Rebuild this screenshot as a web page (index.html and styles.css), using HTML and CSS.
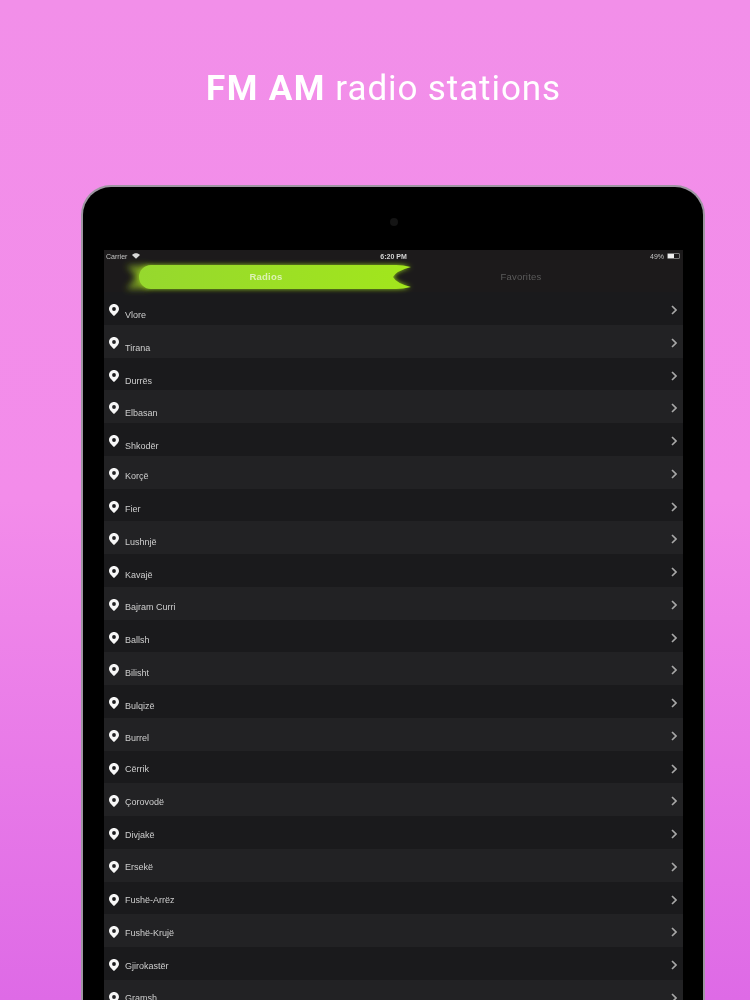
FILE: index.html
```html
<!DOCTYPE html>
<html lang="en">
<head>
    <meta charset="UTF-8">
    <meta name="viewport" content="width=device-width, initial-scale=1.0">
    <title>FM AM radio stations</title>
    <link rel="stylesheet" href="styles.css">
</head>
<body>
    <h1 class="headline"><b>FM AM</b> radio stations</h1>

    <div class="device">
        <div class="bezel-top"><span class="camera"></span></div>
        <div class="screen">
            <div class="status-bar">
                <div class="status-left">
                    <span>Carrier</span>
                    <svg class="wifi" viewBox="0 0 10 7"><path d="M5 7 0 2.2C2.8-.7 7.2-.7 10 2.2Z" fill="#d8d8d8"/></svg>
                </div>
                <div class="status-time">6:20 PM</div>
                <div class="status-right">
                    <span>49%</span>
                    <span class="battery"><span class="battery-level"></span></span>
                </div>
            </div>

            <div class="tabs">
                <div class="tab tab-active">
                    <svg class="tab-shape" viewBox="0 0 300 40">
                        <defs>
                            <filter id="glow" x="-10%" y="-40%" width="120%" height="180%"><feGaussianBlur stdDeviation="2.8"/></filter>
                            <filter id="tailGlow" x="-50%" y="-50%" width="200%" height="200%"><feGaussianBlur stdDeviation="3.4"/></filter>
                            <linearGradient id="pill" x1="0" x2="1" y1="0" y2="0">
                                <stop offset="0" stop-color="#96d82e"/>
                                <stop offset="1" stop-color="#a2e61c"/>
                            </linearGradient>
                        </defs>
                        <path d="M8 9 30 8V32L8 32Q15 26 17 20 15 14 8 9Z" fill="#6f8f20" filter="url(#tailGlow)"/>
                        <path d="M33 8H278Q285 8 293 10 278 14 275 20 278 26 293 30 285 32 278 32H33A12 12 0 0 1 33 8Z" fill="#94cf1e" filter="url(#glow)"/>
                        <path d="M33 8H278Q285 8 293 10 278 14 275 20 278 26 293 30 285 32 278 32H33A12 12 0 0 1 33 8Z" fill="url(#pill)"/>
                    </svg>
                    <span class="tab-label">Radios</span>
                </div>
                <div class="tab">
                    <span class="tab-label">Favorites</span>
                </div>
            </div>

            <ul class="city-list" id="cityList"></ul>
        </div>
    </div>

    <script>
        var cities = ['Vlore', 'Tirana', 'Durrës', 'Elbasan', 'Shkodër', 'Korçë', 'Fier', 'Lushnjë', 'Kavajë', 'Bajram Curri', 'Ballsh', 'Bilisht', 'Bulqizë', 'Burrel', 'Cërrik', 'Çorovodë', 'Divjakë', 'Ersekë', 'Fushë-Arrëz', 'Fushë-Krujë', 'Gjirokastër', 'Gramsh'];
        var pin = '<svg class="pin" viewBox="0 0 10 12"><path fill-rule="evenodd" d="M5 0C2.2 0 0 2.2 0 5 0 7.6 3.4 10.6 5 12 6.6 10.6 10 7.6 10 5 10 2.2 7.8 0 5 0ZM5 3.1A1.9 1.9 0 1 1 5 6.9 1.9 1.9 0 0 1 5 3.1Z" fill="#f6f6f6"/></svg>';
        var chevron = '<svg class="chevron" viewBox="0 0 6 10"><path d="M1 1 5 5 1 9" fill="none" stroke="#a8a8a8" stroke-width="1.6"/></svg>';

        // the label drifts up against the pin further down the list
        function rowClass(i) {
            if (i < 5) return 'city-row';
            return i < 14 ? 'city-row city-row-mid' : 'city-row city-row-low';
        }

        document.getElementById('cityList').innerHTML = cities.map(function(city, i) {
            return '<li class="' + rowClass(i) + '">' + pin + '<span class="city-name">' + city + '</span>' + chevron + '</li>';
        }).join('');
    </script>
</body>
</html>
```

FILE: styles.css
```css
* {
    margin: 0;
    padding: 0;
    box-sizing: border-box;
}

body {
    height: 100vh;
    overflow: hidden;
    font-family: "Liberation Sans", Arial, sans-serif;
    background: linear-gradient(180deg, #f28fe9 0%, #f38cea 50%, #de6ae6 100%);
}

.headline {
    padding: 68px 0 0 17px;
    height: 185px;
    text-align: center;
    font-family: Roboto, sans-serif;
    font-size: 35px;
    line-height: 42px;
    font-weight: 400;
    letter-spacing: 0.9px;
    color: #fff;
    filter: blur(0.4px);
}

.headline b {
    font-weight: 700;
    letter-spacing: 1.4px;
}

.device {
    width: 624px;
    height: 900px;
    margin-left: 81px;
    padding: 0 21px 0 23px;
    background: #000;
    border: 2px solid #9e96a2;
    border-bottom: none;
    border-radius: 30px 30px 0 0;
}

.bezel-top {
    height: 63px;
    display: flex;
    align-items: center;
    justify-content: center;
    padding-top: 6px;
}

.camera {
    width: 8px;
    height: 8px;
    border-radius: 50%;
    background: #141414;
}

.screen {
    width: 579px;
    margin-left: -2px;
    background: #1c1a1b;
    filter: blur(0.35px);
}

.status-bar {
    height: 12px;
    display: grid;
    grid-template-columns: 1fr auto 1fr;
    align-items: center;
    padding: 0 2px;
    font-size: 7px;
    color: #c4c4c4;
}

.status-left, .status-right {
    display: flex;
    align-items: center;
    gap: 3px;
}

.status-right {
    justify-content: flex-end;
}

.status-time {
    color: #d4d4d4;
    font-weight: 700;
}

.wifi {
    width: 8px;
    height: 6px;
    margin-left: 2px;
}

.battery {
    width: 13px;
    height: 6px;
    border: 1px solid #777;
    border-radius: 1px;
    margin-right: 1px;
}

.battery-level {
    display: block;
    width: 6px;
    height: 4px;
    background: #eee;
}

.tabs {
    height: 30px;
    display: grid;
    grid-template-columns: 328px 1fr;
}

.tab {
    position: relative;
    display: flex;
    align-items: center;
    justify-content: center;
    padding-bottom: 2px;
    font-size: 9.5px;
    letter-spacing: 0.2px;
    color: #5b5b5b;
}

.tab-active {
    padding-right: 4px;
    color: #dcf2b4;
    font-weight: 700;
}

.tab-active .tab-label {
    position: relative;
}

.tab + .tab {
    padding-right: 73px;
}

.tab-shape {
    position: absolute;
    left: 14px;
    top: -5px;
    width: 300px;
    height: 40px;
}

.city-list {
    list-style: none;
}

.city-row {
    height: 32.75px;
    display: flex;
    align-items: flex-start;
    padding: 12px 6px 0 4.5px;
    background: #1a1a1c;
    color: #cecece;
    font-size: 9px;
}

.city-row:nth-child(even) {
    background: #222224;
}

.pin {
    width: 10px;
    height: 12px;
    flex-shrink: 0;
}

.city-name {
    flex: 1;
    margin-left: 6.5px;
    margin-top: 5px;
    line-height: 12px;
}

.city-row-mid .city-name {
    margin-top: 2.5px;
}

.city-row-low .city-name {
    margin-top: 0.5px;
}

.chevron {
    width: 6px;
    height: 10px;
    margin-top: 1px;
}
```
